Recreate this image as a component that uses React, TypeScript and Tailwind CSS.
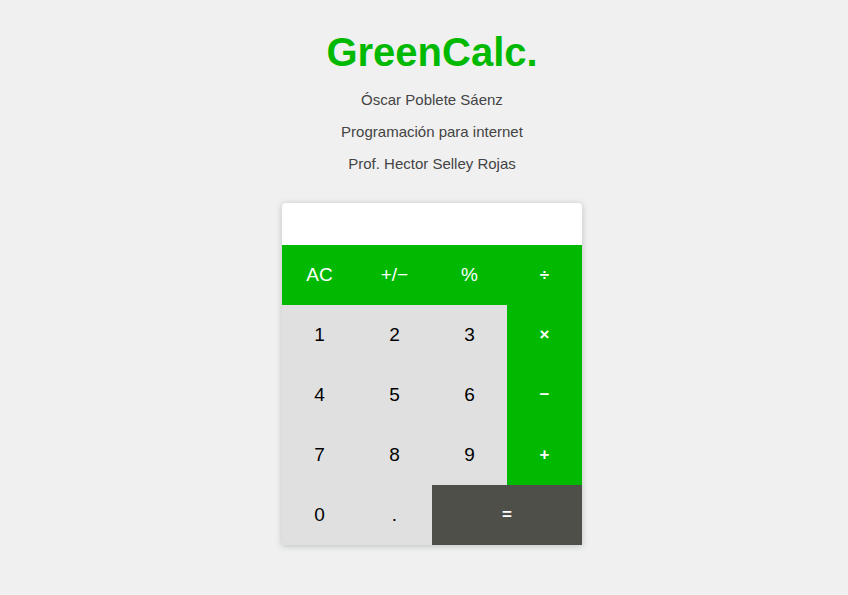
import React from "react";

const keys: { label: string; cls: string; span?: boolean; op?: boolean }[] = [
  { label: "AC", cls: "bg-[#00b900] text-white" },
  { label: "+/−", cls: "bg-[#00b900] text-white" },
  { label: "%", cls: "bg-[#00b900] text-white" },
  { label: "÷", cls: "bg-[#00b900] text-white", op: true },
  { label: "1", cls: "bg-[#e0e0e0] text-black" },
  { label: "2", cls: "bg-[#e0e0e0] text-black" },
  { label: "3", cls: "bg-[#e0e0e0] text-black" },
  { label: "×", cls: "bg-[#00b900] text-white", op: true },
  { label: "4", cls: "bg-[#e0e0e0] text-black" },
  { label: "5", cls: "bg-[#e0e0e0] text-black" },
  { label: "6", cls: "bg-[#e0e0e0] text-black" },
  { label: "−", cls: "bg-[#00b900] text-white", op: true },
  { label: "7", cls: "bg-[#e0e0e0] text-black" },
  { label: "8", cls: "bg-[#e0e0e0] text-black" },
  { label: "9", cls: "bg-[#e0e0e0] text-black" },
  { label: "+", cls: "bg-[#00b900] text-white", op: true },
  { label: "0", cls: "bg-[#e0e0e0] text-black" },
  { label: ".", cls: "bg-[#e0e0e0] text-black" },
  { label: "=", cls: "bg-[#4e4f48] text-white", span: true, op: true },
];

export default function App() {
  return (
    <div
      className="min-h-[595px] w-full bg-[#f0f0f0] flex flex-col items-center pt-[29px] pl-[16px]"
      style={{ fontFamily: "'Liberation Sans', Arial, sans-serif" }}
    >
      <h1 className="text-[40px] leading-[46px] font-bold text-[#00b900]">
        GreenCalc.
      </h1>
      <div className="mt-[16px] flex flex-col items-center gap-[14px] text-[15px] leading-[18px] text-[#444]">
        <p>Óscar Poblete Sáenz</p>
        <p>Programación para internet</p>
        <p>Prof. Hector Selley Rojas</p>
      </div>
      <div className="mt-[30px] w-[300px] rounded-t-[4px] overflow-hidden shadow-[0_1px_6px_rgba(80,110,100,0.35)]">
        <div className="h-[42px] bg-white" />
        <div className="grid grid-cols-4 auto-rows-[60px]">
          {keys.map((k) => (
            <div
              key={k.label}
              className={`${k.cls} ${k.span ? "col-span-2" : ""} flex items-center justify-center ${
                k.op ? "text-[17px] font-bold" : "text-[19px]"
              }`}
            >
              {k.label}
            </div>
          ))}
        </div>
      </div>
    </div>
  );
}
